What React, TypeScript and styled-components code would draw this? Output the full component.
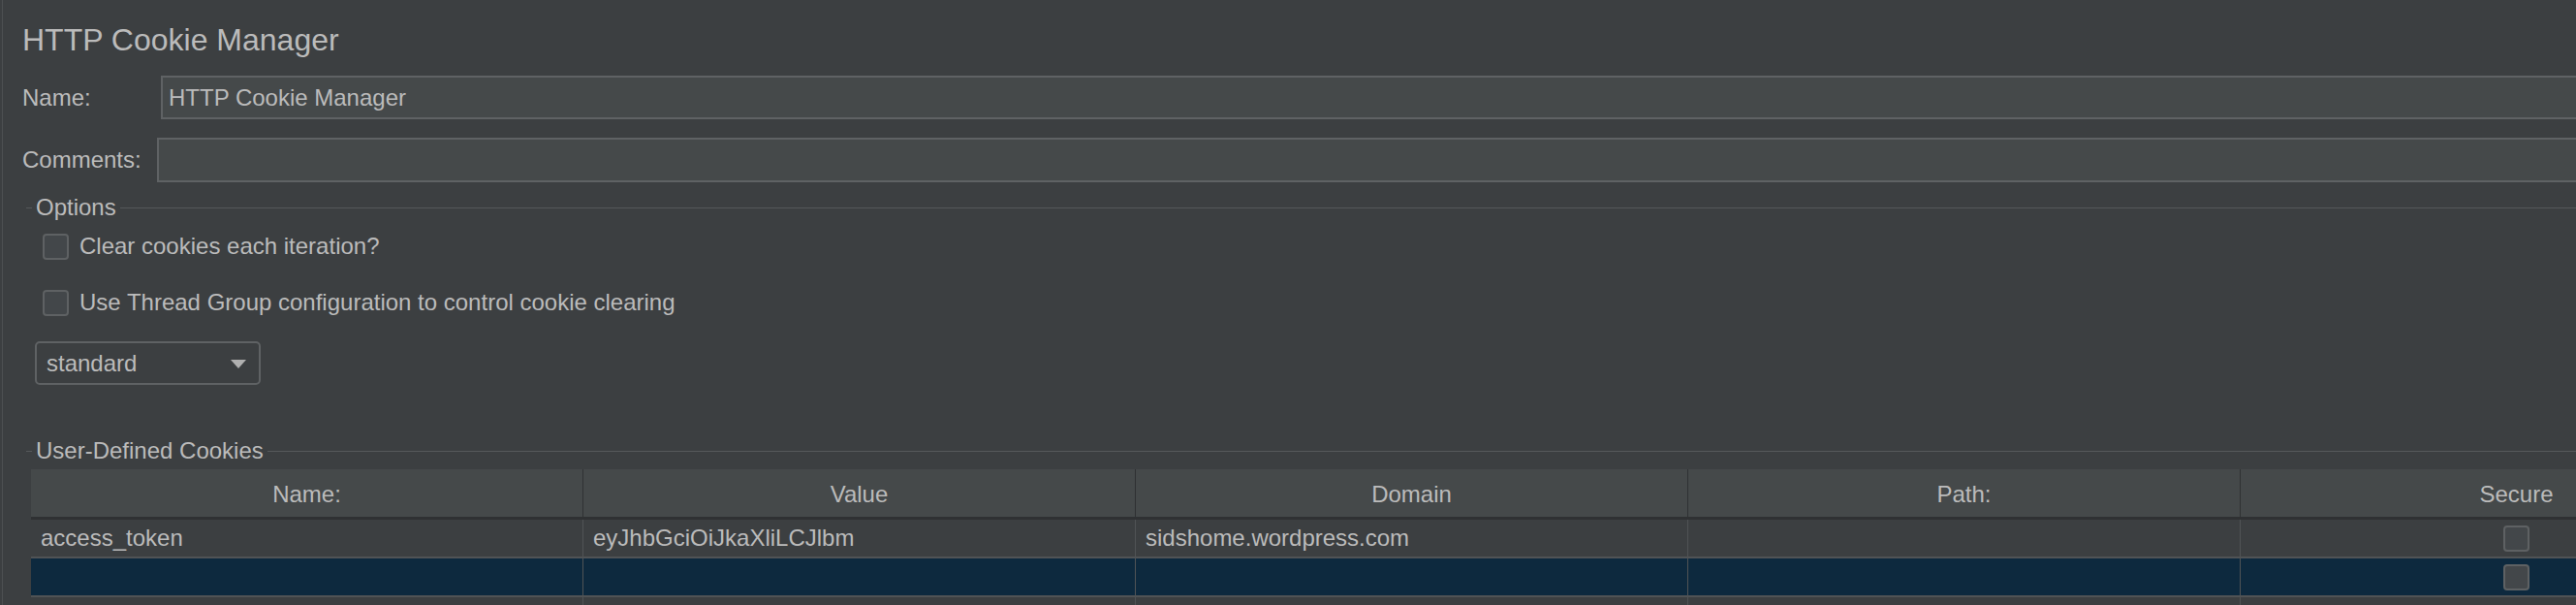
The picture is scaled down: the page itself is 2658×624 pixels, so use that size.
import React from 'react';
import styled, { createGlobalStyle } from 'styled-components';

const colors = {
  bg: '#3c3f41',
  field: '#45494a',
  fieldBorder: '#5f6264',
  text: '#bbbbbb',
  line: '#505355',
  headerLine: '#2f3133',
  selected: '#0d293e',
  check: '#43474a',
};

type Cookie = {
  name: string;
  value: string;
  domain: string;
  path: string;
  secure: boolean;
  selected?: boolean;
};

const columns = ['Name:', 'Value', 'Domain', 'Path:', 'Secure'];

const cookies: Cookie[] = [
  { name: 'access_token', value: 'eyJhbGciOiJkaXliLCJlbm', domain: 'sidshome.wordpress.com', path: '', secure: false },
  { name: '', value: '', domain: '', path: '', secure: false, selected: true },
];

const App = () => {
  return (
    <>
      <GlobalStyle />
      <Page>
        <Panel>
          <Title>HTTP Cookie Manager</Title>
          <FormRow>
            <FieldLabel width={143}>Name:</FieldLabel>
            <TextField>HTTP Cookie Manager</TextField>
          </FormRow>
          <FormRow spaced>
            <FieldLabel width={139}>Comments:</FieldLabel>
            <TextField />
          </FormRow>

          <Section top={12}>
            <Legend>
              <LegendDash />
              <LegendText>Options</LegendText>
              <LegendLine />
            </Legend>
            <CheckRow top={10}>
              <CheckBox />
              <span>Clear cookies each iteration?</span>
            </CheckRow>
            <CheckRow top={26}>
              <CheckBox />
              <span>Use Thread Group configuration to control cookie clearing</span>
            </CheckRow>
            <Combo>
              <span>standard</span>
              <Arrow />
            </Combo>
          </Section>

          <Section top={54}>
            <Legend>
              <LegendDash />
              <LegendText>User-Defined Cookies</LegendText>
              <LegendLine />
            </Legend>
            <Table>
              <HeaderRow>
                {columns.map((col) => (
                  <HeaderCell key={col}>{col}</HeaderCell>
                ))}
              </HeaderRow>
              {cookies.map((c, i) => (
                <Row key={i} selected={c.selected}>
                  <Cell>{c.name}</Cell>
                  <Cell>{c.value}</Cell>
                  <Cell>{c.domain}</Cell>
                  <Cell>{c.path}</Cell>
                  <Cell center>
                    <CheckBox />
                  </Cell>
                </Row>
              ))}
              <Row>
                <Cell />
                <Cell />
                <Cell />
                <Cell />
                <Cell />
              </Row>
            </Table>
          </Section>
        </Panel>
      </Page>
    </>
  );
};

export default App;

const GlobalStyle = createGlobalStyle`
  html, body {
    margin: 0;
    padding: 0;
    background: ${colors.bg};
    overflow: hidden;
  }
  body {
    font-family: "Liberation Sans", Arial, sans-serif;
    color: ${colors.text};
  }
`;

const Page = styled.div`
  width: 2900px;
  height: 624px;
  padding-left: 2px;
  box-sizing: border-box;
  background: ${colors.bg};
  overflow: hidden;
`;

const Panel = styled.div`
  height: 100%;
  box-sizing: border-box;
  border-left: 1px solid #4c4f51;
  padding: 23px 0 0 20px;
  font-size: 24px;
`;

const Title = styled.h1`
  margin: 0 0 19px 0;
  font-size: 32px;
  line-height: 36px;
  font-weight: 400;
`;

const FormRow = styled.div<{ spaced?: boolean }>`
  display: flex;
  align-items: center;
  height: ${({ spaced }) => (spaced ? 46 : 45)}px;
  margin-top: ${({ spaced }) => (spaced ? 19 : 0)}px;
`;

const FieldLabel = styled.div<{ width: number }>`
  width: ${({ width }) => width}px;
  flex-shrink: 0;
  line-height: 28px;
`;

const TextField = styled.div`
  flex: 1;
  height: 100%;
  box-sizing: border-box;
  border: 2px solid ${colors.fieldBorder};
  background: ${colors.field};
  padding: 0 6px;
  display: flex;
  align-items: center;
`;

const Section = styled.section<{ top: number }>`
  margin: ${({ top }) => top}px 0 0 4px;
`;

const Legend = styled.div`
  display: flex;
  align-items: center;
  height: 28px;
`;

const LegendDash = styled.div`
  width: 6px;
  height: 1px;
  background: #55585a;
`;

const LegendText = styled.span`
  padding: 0 4px;
  line-height: 28px;
`;

const LegendLine = styled.div`
  flex: 1;
  height: 1px;
  background: #55585a;
`;

const CheckRow = styled.div<{ top: number }>`
  display: flex;
  align-items: center;
  gap: 11px;
  height: 32px;
  margin-top: ${({ top }) => top}px;
  padding-left: 17px;
`;

const CheckBox = styled.div`
  width: 27px;
  height: 27px;
  box-sizing: border-box;
  border: 2px solid #5e6163;
  border-radius: 4px;
  background: ${colors.check};
  flex-shrink: 0;
`;

const Combo = styled.div`
  margin: 24px 0 0 9px;
  width: 233px;
  height: 45px;
  box-sizing: border-box;
  border: 2px solid ${colors.fieldBorder};
  border-radius: 5px;
  padding: 0 13px 0 10px;
  display: flex;
  align-items: center;
  justify-content: space-between;
`;

const Arrow = styled.div`
  width: 0;
  height: 0;
  border-left: 8px solid transparent;
  border-right: 8px solid transparent;
  border-top: 9px solid #b0b0b0;
  margin-top: 2px;
`;

const Table = styled.div`
  margin: 5px 0 0 5px;
  width: 2850px;
`;

const HeaderRow = styled.div`
  display: grid;
  grid-template-columns: repeat(5, 570px);
  border-bottom: 3px solid ${colors.headerLine};
`;

const HeaderCell = styled.div`
  height: 49px;
  box-sizing: border-box;
  background: ${colors.field};
  border-right: 1px solid ${colors.headerLine};
  display: flex;
  align-items: center;
  justify-content: center;
  padding-top: 3px;
`;

const Row = styled.div<{ selected?: boolean }>`
  display: grid;
  grid-template-columns: repeat(5, 570px);
  height: 40px;
  box-sizing: border-box;
  border-bottom: 2px solid ${colors.line};
  background: ${({ selected }) => (selected ? colors.selected : colors.bg)};
`;

const Cell = styled.div<{ center?: boolean }>`
  box-sizing: border-box;
  border-right: 1px solid ${colors.line};
  padding: 0 10px;
  display: flex;
  align-items: center;
  justify-content: ${({ center }) => (center ? 'center' : 'flex-start')};
  white-space: nowrap;
  overflow: hidden;
`;
